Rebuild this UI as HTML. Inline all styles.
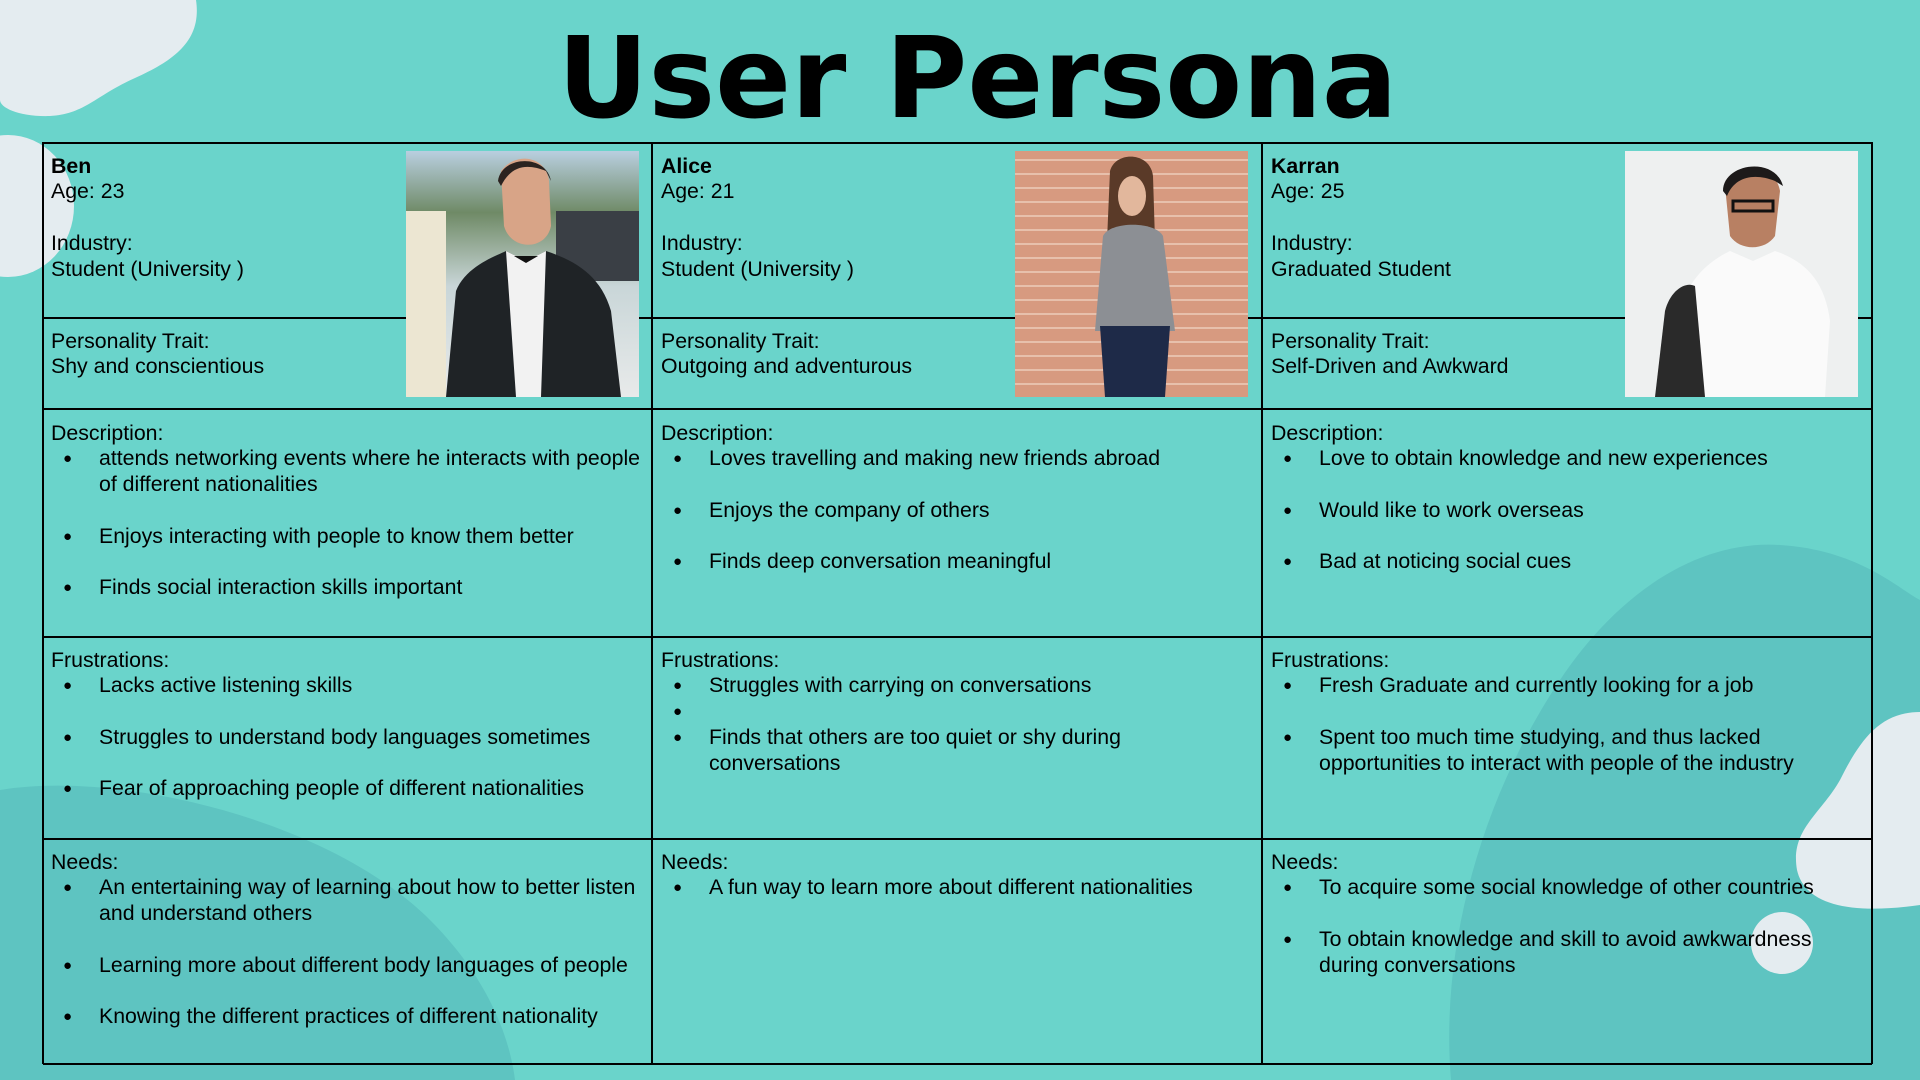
<!DOCTYPE html>
<html><head><meta charset="utf-8"><style>
*{margin:0;padding:0;box-sizing:border-box}
body{width:1920px;height:1080px;background:#6AD4CB;position:relative;overflow:hidden;font-family:"Liberation Sans",Arial,sans-serif;color:#000}
.bg{position:absolute;left:0;top:0}
h1{position:absolute;left:0;width:1955px;top:14px;text-align:center;font-size:112px;font-weight:bold;letter-spacing:0px;font-family:"DejaVu Sans","Liberation Sans",sans-serif}
.h{position:absolute;height:1.5px;background:#000}
.v{position:absolute;width:1.5px;background:#000}
.c{position:absolute;font-family:"Liberation Sans",Arial,sans-serif;font-size:21.3px;line-height:25.8px;width:600px;margin-top:2.5px}
.c b{font-weight:bold}
.b{position:relative;padding-left:48px}
.b:before{content:"●";position:absolute;left:12px;font-size:15px}
.sp{height:25.8px}
.ph{position:absolute;width:233px;height:246px;overflow:hidden}
</style></head><body>
<svg class="bg" width="1920" height="1080">
<path d="M0,790 C120,770 330,820 430,920 C490,980 510,1040 515,1080 L0,1080Z" fill="#5EC4C1"/>
<path d="M1451,1080 C1440,950 1480,800 1560,680 C1620,590 1700,540 1780,545 C1860,550 1900,590 1920,600 L1920,1080Z" fill="#5EC4C1"/>
<path d="M1920,712 C1880,712 1860,740 1840,780 C1820,815 1790,830 1797,870 C1805,905 1850,915 1920,905Z" fill="#E4ECF0"/>
<circle cx="1782" cy="943" r="31" fill="#E4ECF0"/>
<path d="M0,0 L196,0 C202,40 175,60 135,78 C95,96 85,114 50,116 C20,117 0,108 0,100Z" fill="#E4ECF0"/>
<ellipse cx="8" cy="206" rx="66" ry="71" fill="#E4ECF0"/>
</svg>
<h1>User Persona</h1>

<div class="h" style="left:43px;width:1829px;top:142px"></div>
<div class="h" style="left:43px;width:1829px;top:408px"></div>
<div class="h" style="left:43px;width:1829px;top:636px"></div>
<div class="h" style="left:43px;width:1829px;top:838px"></div>
<div class="h" style="left:43px;width:1829px;top:1063px"></div>
<div class="h" style="left:43px;width:1829px;top:317px"></div>
<div class="v" style="left:42px;top:142px;height:922px"></div>
<div class="v" style="left:651px;top:142px;height:922px"></div>
<div class="v" style="left:1261px;top:142px;height:922px"></div>
<div class="v" style="left:1871px;top:142px;height:922px"></div>

<div class="ph" style="left:406px;top:151px;background:linear-gradient(180deg,#b9cfe0 0%,#6f8a66 25%,#c9d6d8 55%,#e8eaea 100%)">
<svg width="233" height="246"><rect x="0" y="60" width="40" height="186" fill="#ece6d2"/><rect x="150" y="60" width="83" height="70" fill="#3a3f45"/><path d="M95,20 C110,0 140,5 143,30 L145,75 C140,100 105,100 98,75Z" fill="#d8a487"/><path d="M92,30 C95,5 140,2 145,30 L140,20 C120,12 105,15 95,35Z" fill="#2b2320"/><path d="M40,246 L50,140 C60,115 90,105 100,100 L120,110 L140,100 C170,110 195,125 205,160 L215,246Z" fill="#1f2326"/><path d="M100,100 L120,110 L140,100 L135,246 L110,246Z" fill="#f2f2f2"/><path d="M108,105 L132,105 L120,112Z" fill="#111"/></svg></div>
<div class="ph" style="left:1015px;top:151px;background:repeating-linear-gradient(0deg,#d79a80 0 12px,#e7c0ac 12px 14px)">
<svg width="233" height="246"><path d="M95,20 C100,0 135,0 138,25 L140,90 L92,90Z" fill="#5a3a28"/><ellipse cx="117" cy="45" rx="14" ry="20" fill="#e2b79c"/><path d="M88,85 C95,70 140,70 148,85 L160,180 L80,180Z" fill="#8c8f94"/><path d="M85,175 L155,175 L150,246 L90,246Z" fill="#1e2a48"/></svg></div>
<div class="ph" style="left:1625px;top:151px;background:#eef0f0">
<svg width="233" height="246"><path d="M100,35 C105,10 150,10 155,40 L150,85 C140,100 115,100 105,85Z" fill="#b88063"/><path d="M98,40 C98,12 150,5 158,35 L150,30 C130,22 110,25 102,45Z" fill="#1d1a1a"/><rect x="108" y="50" width="40" height="10" fill="none" stroke="#111" stroke-width="3"/><path d="M45,246 L55,160 C65,120 95,105 105,100 L128,110 L150,100 C180,110 200,130 205,170 L200,246Z" fill="#fafafa"/><path d="M30,246 L40,160 C45,140 60,130 70,135 L80,246Z" fill="#2a2a2a"/></svg></div>

<!-- column 1 -->
<div class="c" style="left:51px;top:151px"><b>Ben</b><br>Age: 23<div class="sp"></div>Industry:<br>Student (University )</div>
<div class="c" style="left:51px;top:326px">Personality Trait:<br>Shy and conscientious</div>
<div class="c" style="left:51px;top:418px;width:598px">Description:
<div class="b">attends networking events where he interacts with people<br>of different nationalities</div><div class="sp"></div>
<div class="b">Enjoys interacting with people to know them better</div><div class="sp"></div>
<div class="b">Finds social interaction skills important</div></div>
<div class="c" style="left:51px;top:645px;width:598px">Frustrations:
<div class="b">Lacks active listening skills</div><div class="sp"></div>
<div class="b">Struggles to understand body languages sometimes</div><div class="sp"></div>
<div class="b">Fear of approaching people of different nationalities</div></div>
<div class="c" style="left:51px;top:847px;width:598px">Needs:
<div class="b">An entertaining way of learning about how to better listen<br>and understand others</div><div class="sp"></div>
<div class="b">Learning more about different body languages of people</div><div class="sp"></div>
<div class="b">Knowing the different practices of different nationality</div></div>

<!-- column 2 -->
<div class="c" style="left:661px;top:151px"><b>Alice</b><br>Age: 21<div class="sp"></div>Industry:<br>Student (University )</div>
<div class="c" style="left:661px;top:326px">Personality Trait:<br>Outgoing and adventurous</div>
<div class="c" style="left:661px;top:418px;width:598px">Description:
<div class="b">Loves travelling and making new friends abroad</div><div class="sp"></div>
<div class="b">Enjoys the company of others</div><div class="sp"></div>
<div class="b">Finds deep conversation meaningful</div></div>
<div class="c" style="left:661px;top:645px;width:598px">Frustrations:
<div class="b">Struggles with carrying on conversations</div>
<div class="b">&nbsp;</div>
<div class="b">Finds that others are too quiet or shy during<br>conversations</div></div>
<div class="c" style="left:661px;top:847px;width:598px">Needs:
<div class="b">A fun way to learn more about different nationalities</div></div>

<!-- column 3 -->
<div class="c" style="left:1271px;top:151px"><b>Karran</b><br>Age: 25<div class="sp"></div>Industry:<br>Graduated Student</div>
<div class="c" style="left:1271px;top:326px">Personality Trait:<br>Self-Driven and Awkward</div>
<div class="c" style="left:1271px;top:418px;width:598px">Description:
<div class="b">Love to obtain knowledge and new experiences</div><div class="sp"></div>
<div class="b">Would like to work overseas</div><div class="sp"></div>
<div class="b">Bad at noticing social cues</div></div>
<div class="c" style="left:1271px;top:645px;width:598px">Frustrations:
<div class="b">Fresh Graduate and currently looking for a job</div><div class="sp"></div>
<div class="b">Spent too much time studying, and thus lacked<br>opportunities to interact with people of the industry</div></div>
<div class="c" style="left:1271px;top:847px;width:640px">Needs:
<div class="b">To acquire some social knowledge of other countries</div><div class="sp"></div>
<div class="b">To obtain knowledge and skill to avoid awkwardness<br>during conversations</div></div>
</body></html>
